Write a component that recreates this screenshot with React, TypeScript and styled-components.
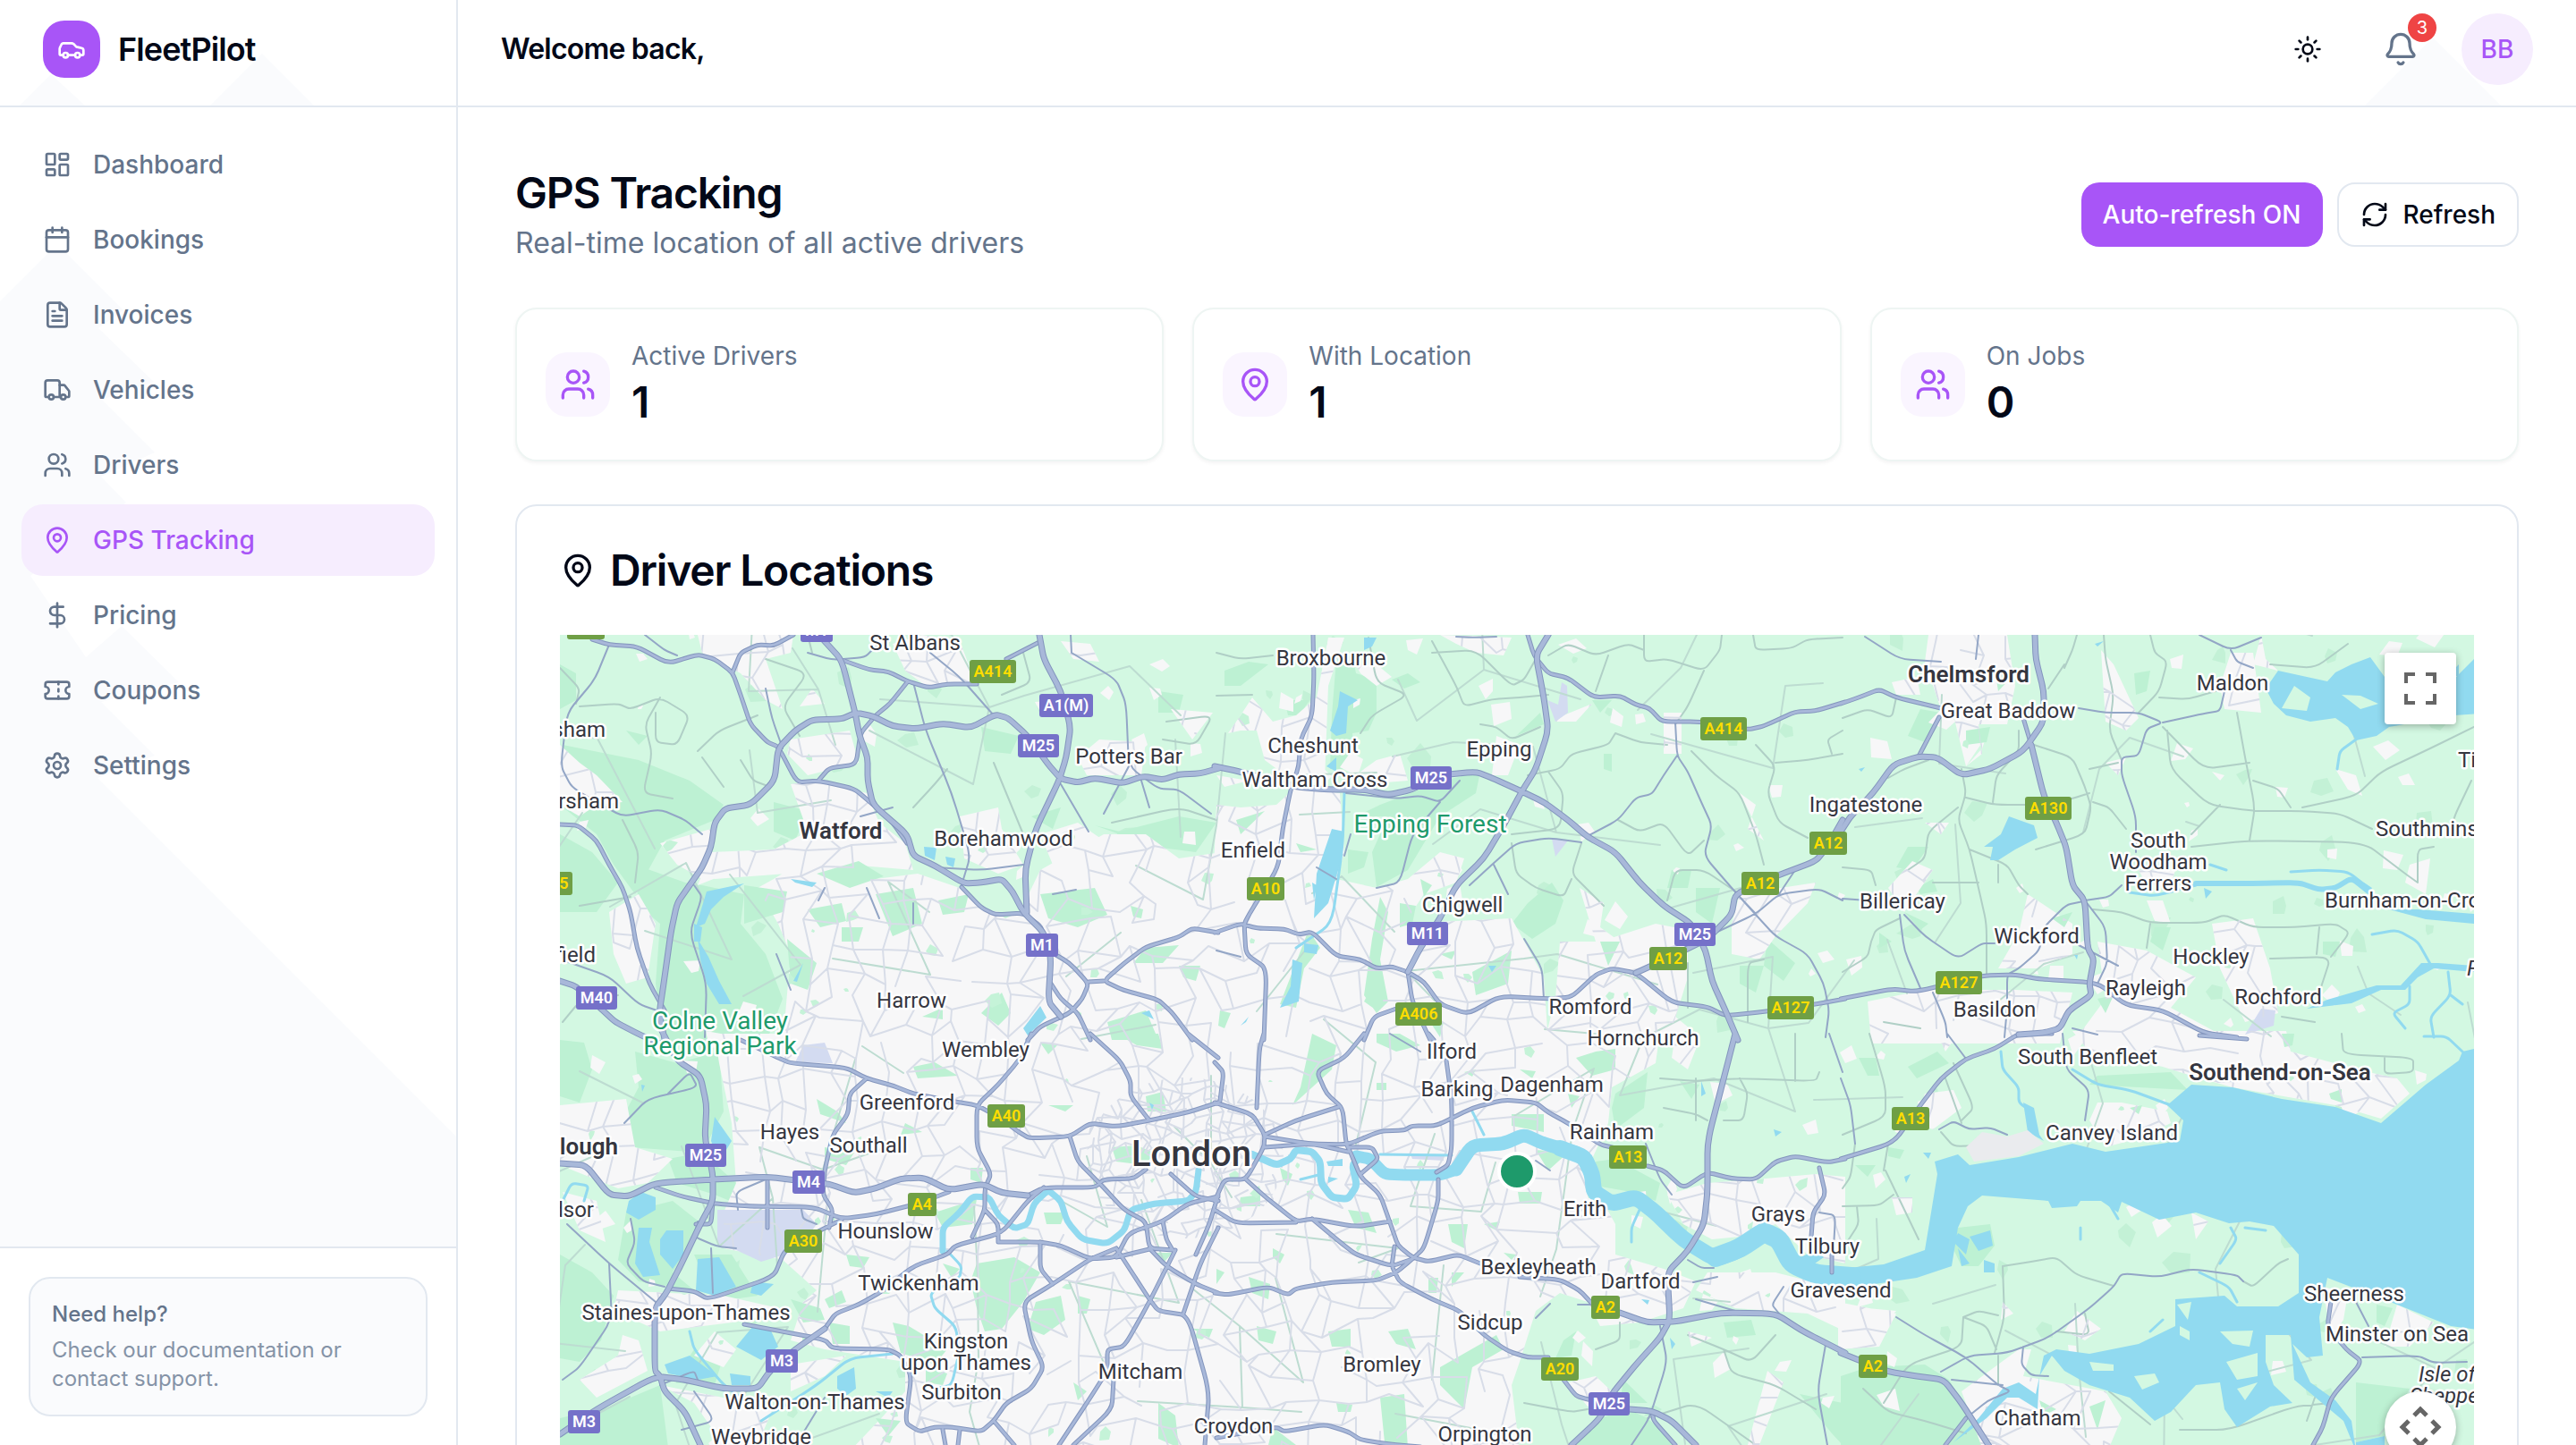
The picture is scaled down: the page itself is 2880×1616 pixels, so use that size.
import React from "react";
import styled, { createGlobalStyle } from "styled-components";
import {
  Bell,
  Calendar,
  Car,
  DollarSign,
  FileText,
  LayoutDashboard,
  MapPin,
  RefreshCw,
  Settings,
  Sun,
  Ticket,
  Truck,
  Users,
} from "lucide-react";

const color = {
  ink: "#020817",
  muted: "#64748b",
  line: "#e2e8f0",
  purple: "#a855f7",
  purpleSoft: "#f6edfe",
  purpleFaint: "#faf5ff",
  facet: "#fafbfd",
  red: "#ef4444",
};

const GlobalStyle = createGlobalStyle`
  *, *::before, *::after { box-sizing: border-box; }
  body {
    margin: 0;
    background: #fff;
    color: ${color.ink};
    font-family: Inter, "Liberation Sans", sans-serif;
    font-size: 28px;
    line-height: 40px;
    -webkit-font-smoothing: antialiased;
  }
  h1, h2, p, ul { margin: 0; padding: 0; }
  button { font: inherit; color: inherit; border: 0; padding: 0; background: none; cursor: pointer; }
`;

/* ---------- page shell ---------- */

const Shell = styled.div`
  display: grid;
  grid-template-columns: 512px minmax(0, 1fr);
  height: 100vh;
  overflow: hidden;
`;

const Sidebar = styled.aside`
  position: relative;
  z-index: 0;
  display: flex;
  flex-direction: column;
  min-height: 0;
  border-right: 2px solid ${color.line};
`;

const SidebarFacets = styled.svg`
  position: absolute;
  inset: 0 auto auto 0;
  z-index: -1;
  fill: ${color.facet};
`;

const Brand = styled.div`
  display: flex;
  align-items: center;
  gap: 20px;
  height: 120px;
  padding: 0 48px 8px;
  border-bottom: 2px solid ${color.line};
`;

const BrandMark = styled.span`
  display: grid;
  place-items: center;
  width: 64px;
  height: 64px;
  border-radius: 24px;
  background: ${color.purple};
  color: #fff;
`;

const BrandName = styled.span`
  font-size: 36px;
  font-weight: 600;
  letter-spacing: -0.025em;
`;

const Nav = styled.nav`
  flex: 1;
  padding: 24px;
`;

const NavList = styled.ul`
  display: flex;
  flex-direction: column;
  gap: 4px;
  list-style: none;
`;

const NavLink = styled.a<{ $active?: boolean }>`
  display: flex;
  align-items: center;
  gap: 24px;
  height: 80px;
  padding: 0 24px;
  border-radius: 24px;
  font-weight: 500;
  text-decoration: none;
  color: ${(p) => (p.$active ? color.purple : color.muted)};
  background: ${(p) => (p.$active ? color.purpleSoft : "transparent")};
`;

const SidebarFooter = styled.div`
  padding: 32px;
  border-top: 2px solid ${color.line};
  background: #fff;
`;

const HelpCard = styled.div`
  padding: 24px;
  border: 2px solid ${color.line};
  border-radius: 24px;
  background: ${color.facet};
  font-size: 24px;
  line-height: 32px;
  color: #8593a7;
`;

const HelpTitle = styled.p`
  margin-bottom: 8px;
  font-weight: 500;
  color: ${color.muted};
`;

const Column = styled.div`
  display: flex;
  flex-direction: column;
  min-width: 0;
  min-height: 0;
`;

const TopBar = styled.header`
  position: relative;
  z-index: 0;
  flex: none;
  display: flex;
  align-items: center;
  justify-content: space-between;
  height: 120px;
  padding: 0 48px 8px;
  border-bottom: 2px solid ${color.line};
`;

const TopBarFacet = styled.svg`
  position: absolute;
  right: 84px;
  bottom: 0;
  z-index: -1;
  fill: ${color.facet};
`;

const Greeting = styled.p`
  font-size: 32px;
  font-weight: 600;
  letter-spacing: -0.025em;
`;

const TopActions = styled.div`
  display: flex;
  align-items: center;
  gap: 32px;
`;

const IconButton = styled.button<{ $muted?: boolean }>`
  position: relative;
  display: grid;
  place-items: center;
  width: 72px;
  height: 72px;
  color: ${(p) => (p.$muted ? color.muted : color.ink)};
`;

const Badge = styled.span`
  position: absolute;
  top: -4px;
  right: -4px;
  width: 32px;
  height: 32px;
  border-radius: 50%;
  background: ${color.red};
  color: #fff;
  font-size: 20px;
  line-height: 32px;
  text-align: center;
`;

const Avatar = styled.button`
  width: 80px;
  height: 80px;
  border-radius: 50%;
  background: ${color.purpleSoft};
  color: ${color.purple};
  font-weight: 500;
`;

/* ---------- main content ---------- */

const Main = styled.main`
  flex: 1;
  min-height: 0;
  display: flex;
  flex-direction: column;
  gap: 48px;
  padding: 64px;
  overflow: hidden;
`;

const PageHead = styled.div`
  display: flex;
  align-items: center;
  justify-content: space-between;
`;

const PageTitle = styled.h1`
  font-size: 48px;
  line-height: 64px;
  font-weight: 600;
  letter-spacing: -0.025em;
`;

const PageLead = styled.p`
  font-size: 32px;
  line-height: 48px;
  color: ${color.muted};
`;

const ButtonRow = styled.div`
  display: flex;
  gap: 16px;
`;

const Button = styled.button<{ $primary?: boolean }>`
  display: flex;
  align-items: center;
  gap: 16px;
  height: 72px;
  padding: 0 24px;
  border-radius: 20px;
  font-weight: 500;
  ${(p) =>
    p.$primary
      ? `background: ${color.purple}; color: #fff;`
      : `background: #fff; border: 2px solid ${color.line};`}
`;

const Stats = styled.section`
  display: grid;
  grid-template-columns: repeat(3, minmax(0, 1fr));
  gap: 32px;
`;

const StatCard = styled.article`
  display: flex;
  align-items: center;
  gap: 24px;
  padding: 32px;
  border: 2px solid #eef5f3;
  border-radius: 24px;
  background: #fff;
  box-shadow: 0 2px 4px rgba(0, 0, 0, 0.05);
`;

const StatIcon = styled.span`
  display: grid;
  place-items: center;
  width: 72px;
  height: 72px;
  border-radius: 24px;
  background: ${color.purpleFaint};
  color: ${color.purple};
`;

const StatLabel = styled.p`
  color: ${color.muted};
`;

const StatValue = styled.p`
  font-size: 48px;
  line-height: 64px;
  font-weight: 600;
`;

const MapCard = styled.section`
  flex: none;
  display: flex;
  flex-direction: column;
  gap: 48px;
  padding: 48px;
  border: 2px solid ${color.line};
  border-radius: 24px;
  background: #fff;
`;

const MapTitle = styled.h2`
  display: flex;
  align-items: center;
  gap: 16px;
  font-size: 48px;
  line-height: 48px;
  font-weight: 600;
  letter-spacing: -0.025em;
`;

const MapFrame = styled.div`
  position: relative;
  height: 960px;
  overflow: hidden;
`;

const MapCanvas = styled.svg`
  display: block;
  width: 100%;
  height: 100%;
  font-family: Roboto, "Liberation Sans", sans-serif;
`;

const MapControl = styled.button<{ $round?: boolean }>`
  position: absolute;
  right: 20px;
  ${(p) => (p.$round ? "bottom: 34px; border-radius: 50%;" : "top: 20px; border-radius: 4px;")}
  display: grid;
  place-items: center;
  width: 80px;
  height: 80px;
  background: #fff;
  box-shadow: 0 2px 8px rgba(0, 0, 0, 0.3);
  color: #666;
`;

/* ---------- map data ---------- */

// The survey is split in six sheets of 1568 x 1380 units; each sheet knows
// which rectangle of the map plane it covers.
const sheets = {
  A: { x: 620, y: 700, w: 740 },
  B: { x: 620, y: 1156, w: 740 },
  C: { x: 1360, y: 700, w: 700 },
  D: { x: 1360, y: 1156, w: 700 },
  E: { x: 2060, y: 700, w: 720 },
  F: { x: 2060, y: 1156, w: 720 },
};
type Sheet = keyof typeof sheets;
type Layer = Partial<Record<Sheet, string[]>>;
type Point = [number, number];

const project = (sheet: Sheet, raw: string): Point[] => {
  const s = sheets[sheet];
  return raw
    .trim()
    .split(/\s+/)
    .map((pair) => {
      const [u, v] = pair.split(",").map(Number);
      return [Math.round(s.x + (u * s.w) / 1568), Math.round(s.y + v / 3)];
    });
};

const area = (pts: Point[]) => `M${pts.map((p) => p.join(" ")).join("L")}Z`;

// Rounds each inner vertex with a quadratic through the segment midpoints.
const curve = (pts: Point[]) => {
  let d = `M${pts[0].join(" ")}`;
  for (let i = 1; i < pts.length - 1; i++) {
    const [x, y] = pts[i];
    const [nx, ny] = pts[i + 1];
    const [px, py] = pts[i - 1];
    d += `L${(px + 3 * x) / 4} ${(py + 3 * y) / 4}Q${x} ${y} ${(nx + 3 * x) / 4} ${(ny + 3 * y) / 4}`;
  }
  return `${d}L${pts[pts.length - 1].join(" ")}`;
};

const build = (layer: Layer, draw: (pts: Point[]) => string) =>
  (Object.keys(layer) as Sheet[])
    .map((k) => layer[k]!.map((raw) => draw(project(k, raw))).join(""))
    .join("");

const motorways: Layer = {
  A: [
    "1575,478 1530,495 1480,497 1440,517 1395,503 1345,527 1280,510 1240,525 1200,512 1170,465 1120,370 1075,310 1045,298 985,342 920,328 855,345 800,335 755,303 715,292 680,312 610,315 570,350 530,410 522,520 465,600 405,612 380,660 370,740 350,810 320,870 290,930 275,1030 258,1200 248,1300 262,1400",
    "635,45 680,115 712,292 722,370 742,440 742,520 755,600 835,700 850,770 900,805 970,865 1010,862 1060,850 1085,890 1110,960 1160,1030 1175,1110 1170,1260 1200,1310",
    "1148,30 1160,110 1200,220 1222,340 1212,440 1195,520 1140,680 1115,820 1118,960",
    "13,1190 50,1210 115,1290 145,1330 205,1375 280,1420",
  ],
  B: [
    "250,-20 290,90 345,140 360,240 355,350 375,470 375,560 345,640 300,770 265,870 237,920 237,1130 250,1150 260,1200 310,1270 345,1380",
    "13,435 75,440 130,540 175,545 240,500 375,490 505,480 590,495 650,505 710,535 760,520 820,485 875,482 935,525 1015,505 1060,535 1120,542",
    "13,1345 100,1260 240,1150 310,1160 400,1190 480,1190 510,1130 570,1060 640,990",
  ],
  C: [
    "-5,470 50,485 200,540 280,550 370,550 430,568 490,550 560,500 650,488 690,510 760,553 820,590 880,650 930,708 1000,760 1060,860 1120,940 1190,1000 1225,1090 1240,1190 1275,1290 1305,1390",
    "830,30 800,100 820,240 830,350 800,480 765,553 720,670 670,780 600,870 560,980 510,1080 480,1160",
    "1050,1165 1130,1115 1230,1050 1290,970 1300,900 1400,840 1500,790 1530,740 1568,650",
  ],
  D: [
    "1300,0 1275,130 1230,360 1230,530 1220,640 1180,730 1130,800 1135,960 1110,1020 1050,1110 990,1210 960,1290 890,1380",
    "1035,1260 1090,1265 1140,1300 1200,1380",
    "1010,935 1080,968 1150,965 1265,935 1400,940 1470,1000 1575,1070",
  ],
  E: [
    "-5,690 20,640 75,560 125,465 185,438 230,440 290,500 360,480 440,420 490,320 490,220 470,110 468,30",
    "460,400 490,570 520,660 545,740 560,870 590,920 597,1080 612,1120 600,1200 605,1240 550,1290 530,1350 490,1365 430,1370",
  ],
  F: ["-5,1070 40,1095 110,1135 180,1150 245,1160 290,1240 360,1390"],
};

const mainRoads: Layer = {
  A: [
    "90,45 130,62 195,70 270,125 340,97 380,112 422,157 440,230 465,330 505,390 530,405 575,525 625,518 710,545 750,595 800,660 835,730",
    "680,115 745,148 790,152 838,185 885,207 930,195 1000,195",
    "1070,110 1148,55",
    "422,157 440,90 480,62 520,65 565,30",
    "838,185 795,260 760,300 725,360 715,465 650,478 625,518",
    "13,665 55,668 100,720 130,800 160,880 180,960 195,1080 225,1200 260,1290",
    "965,875 1010,945 1045,968 1110,962 1155,1010 1160,1080 1220,1130 1265,1200 1250,1250 1220,1300 1150,1345 1120,1390",
    "1175,1200 1200,1250 1240,1300 1270,1390",
    "1572,1028 1510,1015 1480,1045 1400,1078 1350,1130 1300,1190 1345,1220 1430,1255 1465,1300 1510,1390",
    "1300,1190 1265,1195",
  ],
  B: [
    "440,20 530,80 560,100 690,115 740,150 800,175 850,200 950,228 1000,240 1050,280 1100,330 1125,352 1220,345 1270,300 1330,312 1410,292 1500,265 1572,230",
    "1120,542 1160,515 1280,515 1300,490 1370,485 1400,455",
    "240,515 300,545 380,570 460,580 615,583 680,620 760,605 860,570 935,530",
    "270,855 330,865 365,890 520,815 545,730 600,680 680,625",
    "505,480 505,650",
    "375,560 370,640 335,640",
    "740,150 700,200 695,270 660,340 640,460 635,540 660,590 650,650",
    "1130,0 1100,90 1050,170 1000,240 1000,380 1035,470 1020,520 1020,590 990,680",
    "640,990 665,940 720,910 780,860 850,780 930,740 950,710 1060,670 1120,560 1160,515",
    "1050,700 1150,700 1200,710 1270,755 1330,750 1360,670 1440,630 1500,570 1572,545",
    "1020,590 1050,640 1050,700",
    "1330,720 1270,755 1180,840 1110,900 1130,1030 1160,1120 1130,1190 1070,1240 1040,1300 1010,1335 940,1320 900,1320 865,1335 830,1305 845,1150 820,1080 790,1060 660,1055 640,1025 450,975",
    "1270,0 1340,90 1365,160 1365,210 1410,290",
    "1500,0 1572,80",
    "1220,345 1240,430 1290,500 1350,590 1400,630 1410,720 1465,725",
    "1330,750 1410,722",
    "1460,470 1520,545 1572,560",
    "1330,720 1410,890 1430,930 1500,945 1550,1200 1540,1380",
    "1410,720 1450,780 1520,840 1572,870",
    "1470,725 1410,900 1350,1050 1310,1060 1310,1130 1270,1220 1195,1380",
    "1325,1160 1320,1260 1230,1380",
    "1040,1300 1090,1380",
    "920,1330 925,1380",
    "960,1330 955,1380",
    "1150,700 1150,790 1180,840",
    "1440,630 1450,690 1465,725",
    "1572,650 1530,770 1490,940",
    "1572,540 1550,640 1520,740",
  ],
  C: [
    "243,30 245,170 240,300 210,380 205,470 185,550 165,680 155,810 85,960 70,1000 75,1100 125,1150 118,1390",
    "480,1160 490,1260 535,1390",
    "780,30 795,100 830,160 880,175 945,240 1010,235 1050,265 1085,275 1115,320 1210,322 1330,348 1370,335 1450,287 1500,285 1575,255",
    "-5,1030 60,1000 100,1015 170,1018 205,1035 240,1025 300,1108 360,1120 400,1148 440,1142 480,1160 520,1195 560,1270 630,1302 710,1242 830,1250 890,1245 950,1170 990,1150 1050,1165 1140,1262 1230,1278 1275,1308 1380,1293 1500,1270 1575,1250",
    "370,1390 395,1310 450,1285",
  ],
  D: [
    "118,0 108,50 100,250",
    "-5,95 18,130 10,225",
    "-5,230 90,270 120,340 118,380 75,490 20,490 -5,560",
    "75,490 120,545 200,630 240,620 350,648 435,630",
    "-5,590 50,635 200,632",
    "370,0 320,80 250,125 275,200 315,250 325,370 335,400 360,480 410,540 440,650 455,710 490,750 530,765 605,742 660,770",
    "305,245 200,290 120,340",
    "120,345 230,370 330,372 410,328 470,325 490,310 550,308 640,250 720,222 800,232 830,265 880,300 960,372 1000,385",
    "1080,445 1120,460 1170,518 1230,465 1290,485 1350,488 1400,430 1450,410 1530,432 1575,420",
    "120,380 240,370 330,395",
    "330,380 390,380 405,420 360,470",
    "575,90 590,220 590,380 580,440 550,465",
    "555,490 555,560 520,720 490,755 450,800 400,828 290,835 200,855 180,875 130,850 30,875 -5,870",
    "240,622 310,700 350,740 440,780 490,755",
    "445,715 440,780 460,835 540,890 610,930 670,1010 730,1065 780,1085 830,1085",
    "760,815 860,825 910,860 940,905",
    "870,1160 900,1215 930,1228 980,1240",
    "1090,1270 1095,1300 1150,1380",
    "0,1355 60,1340 150,1320 170,1335 270,1310 330,1335 360,1362 430,1378 510,1385",
    "1510,450 1525,540 1495,600 1490,680",
    "1540,740 1540,800",
    "530,0 545,20",
  ],
  E: [
    "235,305 185,438",
    "440,310 460,400",
    "-5,260 40,240 90,213 130,240 240,275",
    "-5,1250 120,1217 180,1228 340,1172 420,1170 480,1185 620,1198 690,1272 780,1290 880,1365 960,1380",
  ],
  F: [
    "-5,420 125,365 190,240 240,150 300,85 370,50 430,0 510,0",
    "870,5 985,18",
    "300,1290 250,1380",
    "1190,900 1180,980 1225,1060 1265,1100 1190,1220 1170,1320 1145,1380",
  ],
};

const localRoads: Layer = {
  A: [
    "850,190 880,350 940,560 985,770 965,870",
    "1225,90 1330,180 1355,260 1360,470 1430,545 1480,550 1555,630",
    "1225,90 1222,30",
    "1360,470 1300,630",
    "1200,530 1265,690",
    "1390,520 1410,610",
    "500,210 515,310 540,410",
    "130,62 95,180 30,290 15,470 40,540 100,590 160,640 250,615 310,650 350,700",
    "600,90 660,115 735,105 760,70",
    "890,90 960,170 1040,300",
    "900,810 1010,820 1110,800",
    "330,870 350,910 320,1030 360,1200 355,1380",
    "525,1100 560,1220",
    "740,880 770,980",
    "850,930 850,1000",
    "15,1120 130,1175 200,1270 260,1300",
    "215,30 260,80 290,100",
    "725,640 800,610",
    "1180,900 1235,885",
    "640,880 625,920",
  ],
  B: [
    "165,300 220,220 340,180 320,130 270,200",
    "435,590 430,530 500,490",
    "585,590 590,620 620,640",
    "340,630 330,680 385,715 430,720",
    "180,620 190,700 170,770 210,830 260,850",
    "370,720 375,870",
    "30,640 130,770 240,900",
    "250,1180 330,1130 340,1160",
    "330,1200 380,1300 300,1330",
    "130,770 135,960 60,1120 20,1160",
    "580,1360 640,1220",
  ],
  C: [
    "1150,325 1153,435 1180,490 1215,590 1240,670 1220,770 1290,880 1350,970 1400,1040 1480,1100 1520,1200 1535,1290 1525,1380",
    "1153,435 1120,500 1090,565 1050,575 1005,650 930,705",
    "635,870 690,800 750,730 830,712 915,725",
    "1250,1030 1350,965 1410,900 1510,882 1568,920",
    "1310,910 1350,965",
    "1410,900 1450,820",
    "560,590 490,700 460,860 400,880",
    "325,560 450,580 510,570 560,590 610,520",
    "770,1050 815,1150 820,1250",
    "695,800 730,900",
    "250,810 300,850",
    "335,700 320,770",
    "600,35 640,40 700,35",
    "0,1090 60,1110",
  ],
  D: [
    "435,0 510,60",
    "1075,370 1110,490 1140,540",
    "1110,980 1130,1100 1085,1290 1040,1380",
    "1180,760 1215,785 1245,785",
    "1195,835 1255,815",
    "800,425 835,458",
    "1535,0 1568,130",
    "905,908 940,908",
    "835,905 800,955",
    "1200,890 1300,930",
    "1420,850 1390,910 1410,940",
    "1510,600 1550,610 1545,720",
    "1525,1045 1505,1200 1530,1380",
  ],
  E: [
    "55,35 140,110 240,120",
    "330,30 325,110",
    "575,275 640,290 720,290 780,325 740,345 720,435 680,440 680,500 715,640 715,760",
    "780,325 880,295 920,285 930,220",
    "150,970 200,1040 280,1115 340,1065 370,1065",
    "140,970 150,1090 190,1215",
    "585,925 545,935 490,1010 480,1090 430,1150 400,1170 400,1280 395,1380",
    "680,870 650,910 590,920",
    "590,920 640,1010 645,1130 620,1200",
    "220,1230 250,1330 255,1380",
    "575,1070 670,1140",
    "0,915 60,920",
    "870,30 945,80 1020,40",
    "945,80 960,120 1000,140",
    "560,1350 620,1370",
  ],
  F: [
    "240,1135 310,1080 400,1070 500,1020 600,920 660,850 680,805 770,815 850,790 960,810 975,830",
    "130,950 200,1010 300,1085 380,1180 410,1200 355,1230 300,1290",
    "440,1050 435,1110 460,1145 500,1150",
    "265,1160 390,1180",
    "535,0 545,120 600,190 590,290",
    "235,320 270,295 310,320 360,315 400,340",
    "1265,1085 1400,1080 1440,1105 1520,1100",
    "-5,150 20,240 30,370",
    "1250,900 1280,980",
    "255,0 300,85",
  ],
};

const lanes: Layer = {
  A: [
    "13,140 60,210 50,260",
    "60,270 150,260 180,280 250,240 320,300 290,400 240,390 240,290",
    "250,240 215,330 230,430 210,560 280,580",
    "500,110 600,160 540,270 580,370",
    "340,420 390,350 480,300",
    "350,440 400,540",
    "160,650 200,760 190,860",
    "440,450 470,520 510,540",
    "1060,230 1130,190 1110,90",
    "850,610 900,530 930,480",
    "1040,460 1110,700",
    "600,30 610,90",
    "1320,660 1480,610 1568,650",
    "1450,320 1560,300 1520,400 1440,380",
    "60,940 180,910",
    "20,1330 60,1260 150,1240",
  ],
  C: [
    "0,90 60,110 140,100",
    "0,235 90,230",
    "540,50 600,200 620,270 690,245 760,240 830,230",
    "540,90 650,80 740,200 770,180 800,110",
    "380,40 400,190 480,230 390,300 360,360",
    "660,330 700,340 740,380 810,340",
    "1000,360 980,400 890,430 860,480 780,500",
    "1000,360 1060,390 1130,400",
    "830,100 880,60 950,100 1030,60 1070,80",
    "980,100 950,220",
    "1070,30 1070,120 1130,110 1220,150 1260,80 1265,30",
    "1220,150 1180,270 1150,330",
    "1350,400 1400,470 1380,560 1410,660 1480,710",
    "1400,460 1480,450 1568,430",
    "1345,30 1350,80 1440,75 1480,45 1568,40",
    "1190,420 1250,500 1310,560 1350,700 1370,800",
    "1005,650 1060,690 1120,660 1180,770 1220,720",
    "830,490 870,560 860,680 740,700",
    "915,730 890,830 940,900 970,940",
    "740,730 750,830 800,880 870,910 890,850",
    "1130,920 1150,820 1220,820 1310,900",
    "1180,1130 1180,1280",
    "1330,1330 1330,1130 1370,1120",
    "1568,350 1530,380 1540,430",
  ],
  D: [
    "1110,150 1200,160 1310,150 1500,160 1510,130",
    "1310,150 1330,200 1320,290 1270,290",
    "1120,250 1200,270 1230,290",
    "1200,150 1200,290",
    "1450,0 1450,160",
    "1180,1010 1270,1060 1340,1100 1400,1010",
    "1270,1060 1290,1140 1400,1180 1500,1260",
    "950,1060 1010,1030 1010,970",
    "770,1240 890,1270 930,1260",
    "1080,1290 1200,1240 1350,1380",
  ],
  E: [
    "0,310 60,280 120,310 130,240",
    "110,510 150,480 210,450",
    "290,480 300,560 280,650 310,750 330,880 350,1000 350,1170",
    "280,610 210,690 200,780 160,820",
    "300,575 370,600 500,600 560,580 600,560",
    "365,590 375,500 430,420 430,350",
    "465,400 560,440 590,540 605,610 590,700 470,750",
    "600,480 670,460",
    "610,590 650,610 690,680",
    "635,30 640,110 660,230 650,350 680,450",
    "750,30 760,90 790,120 770,220 720,290",
    "770,240 840,245 930,210",
    "540,140 560,80 570,30",
    "500,210 540,130",
    "780,340 880,480 990,460",
    "790,350 800,480 890,600 1000,620 1120,620 1210,630 1290,680",
    "960,290 980,440 1005,610 990,720",
    "1000,520 1060,545 1090,610",
    "920,600 850,700",
    "1538,340 1430,410 1310,490 1250,570 1120,610",
    "850,740 990,720 1270,725 1370,830 1400,860",
    "1440,740 1400,750 1400,860",
    "310,750 400,800 430,870 450,900",
    "380,860 380,800",
    "220,860 330,860",
    "70,1060 80,1020 140,980",
    "0,1160 60,1110 70,1060",
    "610,950 680,960 750,995 880,995 930,970 1000,1010 1100,1010 1200,1000 1235,1030 1190,1110",
    "1160,1010 1155,1100",
    "1040,1115 1190,1110 1160,1230",
    "750,1000 740,1080",
    "1040,130 1150,140 1230,60",
    "1530,520 1490,640 1480,700",
    "100,1330 190,1350",
    "1070,1310 1150,1330",
    "0,810 70,820 80,870",
  ],
  F: [
    "390,780 395,950 370,1070",
    "390,780 460,765 520,750 570,810 660,845",
    "65,0 105,180 105,280 0,340",
    "105,460 185,690",
    "110,370 100,460",
    "0,580 90,575 125,540",
    "35,580 40,640 10,700",
    "0,520 20,480 30,370",
    "975,830 1000,850 1060,770 1085,755",
    "1215,0 1220,70 1390,80 1390,130 1320,135 1320,80",
    "250,150 290,300",
    "270,100 320,250 290,290",
    "240,330 270,378 340,375",
    "295,950 330,930 380,945",
    "295,950 290,1050 160,1110 100,1240",
    "295,950 350,980 375,1060",
    "520,1000 600,1010 590,940",
    "50,1190 110,1270 200,1300 300,1340",
    "820,1330 940,1330 1100,1250 1190,1240",
    "1130,1300 1150,1220",
    "650,1200 750,1310",
    "380,1180 380,1080",
  ],
};

const towns: Layer = {
  A: [
    "540,1400 560,1100 530,1000 480,880 520,850 600,780 700,790 760,850 860,830 960,880 1010,950 1100,970 1150,820 1300,700 1400,700 1480,780 1580,760 1580,1400",
    "560,530 620,520 740,560 770,660 830,730 850,820 700,800 550,830 380,850 370,760 520,750 600,690",
    "800,60 870,30 960,50 1000,200 880,200 830,150",
    "340,30 565,30 560,90 500,110 540,280 500,250 440,160 350,90",
    "560,380 700,350 720,460 600,500 550,430",
    "13,400 60,460 100,500 160,590 100,600 60,640 13,600",
    "960,640 1050,610 1060,680 1110,800 1050,830 970,780",
    "1290,380 1400,390 1390,500 1260,500 1240,440",
    "250,730 370,680 370,760 350,850 290,800",
    "1150,700 1240,660 1300,720 1180,800",
    "130,960 200,900 240,1000 220,1180 170,1200 140,1100",
    "500,760 430,820 340,870 370,760",
    "1200,50 1270,60 1290,120 1230,110",
    "610,210 640,260 580,270",
    "1460,280 1560,290 1510,380",
  ],
  B: [
    "380,0 1580,0 1580,1400 700,1400 780,1280 830,1200 830,1100 640,1060 560,1030 590,900 620,860 540,760 400,720 400,600 430,500 420,300 390,100",
    "13,240 170,220 190,380 280,420 220,500 150,520 13,440",
    "150,860 400,880 560,930 420,970 250,1000 140,930",
    "250,1180 400,1220 520,1250 480,1380 400,1380 330,1240",
    "20,530 100,560 120,700 60,660",
    "60,1160 150,1080 160,1010 200,1030 220,1130 100,1220",
    "380,1000 430,1060 400,1120 330,1080",
    "560,1110 690,1080 640,1150 560,1200",
  ],
  C: [
    "-10,880 -5,740 0,600 60,610 150,600 200,540 310,560 320,760 300,850 400,880 480,850 560,760 620,780 600,860 520,900 470,1000 600,990 740,980 780,1080 820,1180 830,1400 -10,1400",
    "860,1060 960,1060 1100,1000 1180,1020 1180,1180 1130,1400 820,1400 850,1250",
    "1310,900 1500,860 1480,930 1400,1040 1360,1120 1290,1100 1290,1000",
    "90,240 140,320 200,300 250,240 280,40 320,40 280,200 270,520 190,520 120,450 100,350 60,350 30,360 60,300",
    "560,30 740,40 720,100 650,90 600,60",
    "700,370 760,400 730,500 690,500",
    "1120,290 1165,290 1165,430 1120,430",
    "350,130 400,130 440,170 400,200 360,160",
    "360,490 400,450 460,430 480,520 370,530",
    "910,880 970,930 960,1010 1010,1060 950,1060",
    "870,300 940,260 900,320 850,320",
    "1310,560 1350,600 1330,680 1370,720",
    "0,500 80,520 20,540",
  ],
  D: [
    "-10,-10 1110,-10 1100,100 990,180 980,300 940,420 950,520 1000,640 1000,740 1120,790 1200,830 1170,920 1060,970 960,980 930,900 860,870 800,930 760,1100 740,1180 760,1400 -10,1400",
    "1130,540 1230,500 1350,490 1500,470 1575,480 1575,770 1480,740 1400,640 1310,680 1240,690 1170,640",
    "1230,800 1400,800 1575,860 1575,1000 1480,940 1300,920 1200,860",
    "1150,0 1210,20 1180,120 1140,80",
    "1380,1130 1420,1170 1360,1380 1330,1380",
    "880,1170 950,1150 990,1200 930,1250",
    "1180,1000 1240,1020 1190,1050",
  ],
  E: [
    "210,30 400,30 420,200 400,330 330,330 340,430 300,470 270,300 240,280 200,120",
    "945,90 1000,90 1020,290 930,280 920,200",
    "170,790 220,820 150,960 110,880",
    "450,900 560,1000 560,1100 480,1150 380,1150 430,1030",
    "60,1260 200,1220 420,1220 560,1230 530,1400 70,1400",
    "620,1060 740,1090 860,1180 800,1280 960,1400 560,1400 640,1250",
    "900,1000 1000,980 1040,1150 1060,1300 980,1330 920,1150",
    "720,820 810,820 800,870 740,870",
    "740,920 780,920 800,1000 760,990",
    "1200,480 1250,500 1265,570 1230,550",
    "1380,800 1430,780 1420,900 1370,860",
    "630,80 660,130 720,310 690,350 640,320",
    "200,660 260,660 240,700",
    "340,410 350,370 300,470",
    "120,190 180,170 190,230 130,230",
    "640,460 690,440 670,500",
    "1020,30 1030,110 1060,150 1000,130",
    "900,490 930,500 920,520",
  ],
  F: [
    "560,-10 1080,-10 1090,60 1280,130 1350,150 1380,200 1310,285 1200,240 950,180 850,140 780,110 600,60",
    "620,230 680,230 790,260 800,300 720,350 640,380 600,290",
    "290,1200 430,1060 460,1060 440,1150 640,1200 680,1290 650,1390 340,1390",
    "200,200 270,190 290,250 220,320 180,300",
    "-10,900 130,940 90,1050 -10,1060",
    "1170,850 1230,870 1220,960 1190,1020",
    "1350,910 1440,970 1380,1050 1320,1050",
    "120,550 170,550 170,600 130,610",
    "850,600 890,630 860,690",
    "570,930 630,990 590,1030 540,1000",
    "390,900 415,940 385,960",
    "230,0 280,0 250,60",
    "60,920 130,930 110,960",
  ],
};

const woods: Layer = {
  A: [
    "20,400 200,450 320,520 400,600 380,650 260,720 190,900 140,800 100,700 13,600",
    "190,800 310,860 350,870 450,900 440,1000 500,1100 540,1250 500,1400 260,1400 240,1200 250,1000 200,940",
    "13,130 50,160 50,250 13,280",
    "13,700 90,760 150,860 100,960 13,960",
    "170,350 220,370 200,400",
    "1430,220 1490,230 1480,290 1430,290",
    "520,590 600,620 570,720 520,690",
    "1280,670 1340,690 1480,640 1568,660 1520,760 1420,740",
    "1130,640 1200,610 1180,680",
    "1010,340 1100,370 1080,430 1020,420",
  ],
  B: [
    "190,60 290,100 390,60 400,260 350,400 180,380 165,270 200,180",
    "13,740 90,800 140,880 110,1030 60,1100 13,1090",
    "13,1290 130,1250 250,1180 270,1390 13,1390",
    "170,600 280,560 350,640 280,800 330,860 200,830 150,760",
    "330,740 420,740 480,880 380,900",
    "13,20 70,30 90,120 60,230 13,210",
    "270,420 350,400 430,500 430,570 380,540 290,500",
    "330,1060 400,1080 380,1180 290,1150",
  ],
  C: [
    "300,110 340,100 350,160 400,180 400,290 380,350 340,360 350,480 285,480 290,300",
    "410,600 570,520 660,490 650,560 560,640 480,820 400,875 390,760 430,640 350,640",
    "840,860 870,920 850,1000 790,1050 740,1000 780,930",
    "20,150 80,120 130,130 60,200 20,200",
    "1200,880 1260,880 1240,1000 1200,960",
    "750,370 810,290 820,330",
    "440,180 480,160 510,190 470,210",
    "970,430 990,430 990,490 970,480",
    "170,250 230,250 210,300 180,300",
    "1380,1050 1450,1130 1420,1190 1370,1140",
    "1310,1140 1370,1140 1350,1230 1310,1200",
    "940,250 990,250 960,290",
    "1140,820 1190,820 1180,880 1130,880",
  ],
  D: [
    "1000,200 1080,130 1070,250 1000,320 990,250",
    "950,430 1000,420 1110,500 1100,560 1040,530 950,510",
    "960,1290 1030,1260 1080,1290 1160,1390 880,1390",
    "870,1030 900,1000 890,1080 850,1090",
    "1270,970 1340,960 1350,1010 1280,1020",
    "1020,1160 1080,1240 1010,1240",
    "1160,160 1210,170 1190,220",
    "1460,1210 1568,1240 1568,1380 1540,1340",
  ],
  E: [
    "190,280 240,290 200,390 160,370",
    "710,160 750,150 740,220 715,230",
    "160,740 210,740 170,820 130,810",
    "180,880 220,850 230,890 190,900",
    "1170,1060 1210,1060 1200,1110 1170,1100",
    "760,1010 800,1010 780,1090 750,1060",
    "90,1030 120,1060 90,1080",
    "150,960 210,1000 190,1020",
  ],
  F: [
    "-5,1150 60,1120 200,1110 260,1160 360,1390 -5,1390",
    "280,650 360,640 370,710 330,780 290,780 265,710",
    "1250,1170 1380,1190 1320,1350 1250,1370",
    "620,140 800,130 840,190 720,180 600,170",
    "160,110 230,60 260,100 180,150",
    "1300,910 1340,920 1320,980 1300,970",
    "40,80 80,80 90,140 60,140",
    "110,380 150,390 140,420 110,410",
    "30,440 80,440 60,480",
  ],
};

const parks: Layer = {
  A: [
    "450,870 550,890 540,960 450,1000",
    "760,900 850,880 870,1000 800,1040",
    "550,1050 620,1130 600,1220 560,1200",
    "1010,1300 1060,1230 1080,1300 1050,1340",
    "1310,1330 1400,1290 1430,1390 1320,1390",
    "1370,1130 1400,1080 1480,1070 1440,1130",
    "1150,900 1280,880 1310,970 1240,1010 1170,980",
    "600,950 680,930 690,990 630,1010",
    "870,1310 920,1280 920,1320",
    "1480,1140 1530,1140 1520,1190 1490,1180",
    "910,920 980,900 970,960 920,970",
    "680,1010 730,1010 720,1060 680,1060",
    "1365,940 1395,950 1390,980 1370,975",
    "620,830 720,790 780,840 700,880",
  ],
  B: [
    "1000,770 1090,750 1150,800 1110,900 1060,990 1020,1000 1000,920 985,830",
    "1140,900 1200,880 1210,960 1160,1010 1120,990",
    "800,970 840,980 930,1060 900,1110 820,1070",
    "850,110 900,95 955,140 860,150",
    "1320,380 1380,375 1420,400 1400,440 1330,430",
    "1400,210 1440,195 1450,260 1405,260",
    "1330,0 1430,0 1440,50 1380,40",
    "620,220 670,260 690,300 630,270",
    "900,600 1000,555 990,640 920,650",
    "1430,1240 1470,1280 1480,1390 1430,1360",
    "1170,240 1230,240 1210,260",
    "690,740 745,750 730,785 700,780",
    "640,380 710,400 690,440 640,420",
    "985,450 1015,450 1010,500 985,490",
    "1160,600 1210,600 1200,640 1165,640",
    "1420,735 1465,735 1440,770",
    "640,890 680,860 690,900 650,920",
    "760,1290 820,1300 790,1350",
    "560,890 630,920 640,960 590,970",
    "1240,880 1270,890 1260,940 1240,940",
    "650,970 700,980 700,1040 660,1040",
    "1150,30 1190,40 1170,70",
    "1510,990 1560,990 1550,1020",
    "920,770 960,790 940,820",
    "830,300 870,330 820,340",
    "1230,1170 1260,1200 1240,1230",
    "880,1120 930,1140 920,1180 880,1170",
  ],
  C: [
    "410,910 430,960 410,1120 430,1260 400,1300 370,1240 390,1050",
    "640,1160 740,1090 730,1200 650,1240",
    "960,1060 1010,1060 980,1140",
    "330,750 380,760 370,810 330,830",
    "460,930 500,940 490,1000 460,1010",
    "200,730 250,750 210,760",
    "10,1290 35,1300 20,1350 5,1340",
    "560,1100 600,1090 590,1120",
    "390,1210 420,1240 400,1290 370,1260",
    "510,850 540,870 520,910",
    "230,1020 260,1080 220,1150 200,1280 160,1270",
    "530,1320 570,1330 560,1380",
    "500,630 540,650 500,720 470,700",
    "50,650 120,620 60,700",
  ],
  D: [
    "950,60 1000,50 1000,120 940,140 900,80",
    "560,1120 700,1010 720,1060 640,1120 620,1260 560,1180",
    "330,590 380,600 400,670 350,650",
    "580,640 630,640 620,720 590,700",
    "280,1000 335,990 335,1050 290,1050",
    "430,1000 480,990 500,1060 450,1040",
    "100,980 150,1000 140,1040 105,1030",
    "240,0 300,40 290,120 240,180 190,240 210,180",
    "410,1220 470,1210 480,1390 420,1370",
    "740,270 820,270 820,330 740,310",
    "800,390 880,400 830,460",
    "755,530 815,530 810,570 760,570",
    "160,450 190,470 180,510 165,490",
    "60,550 110,540 110,580 55,580",
    "140,720 170,740 160,770 140,750",
    "80,815 135,840 130,890 90,870",
    "530,820 555,820 550,870 530,870",
    "300,1240 340,1245 335,1270 305,1270",
    "400,0 460,0 510,40 450,60 400,30",
    "670,640 710,630 700,660",
    "400,165 425,165 425,190 400,190",
    "880,200 910,210 890,250",
    "620,130 650,120 640,145",
    "760,120 800,125 790,150",
    "140,1320 200,1380 130,1380",
    "590,800 620,800 590,850",
    "720,735 750,740 740,760",
    "0,790 20,800 0,840",
  ],
  E: [
    "300,350 360,340 350,390 300,400",
    "510,980 560,960 540,1010",
    "370,140 420,160 380,220",
    "620,1250 660,1240 640,1300",
  ],
  F: [
    "1185,200 1215,185 1215,230 1190,220",
    "1070,0 1100,0 1095,40 1075,45",
    "600,1250 640,1230 620,1330",
    "700,250 730,240 720,270",
    "480,1230 520,1260 490,1280",
  ],
};

const water: Layer = {
  A: [
    "360,890 450,865 400,910 370,950 355,1000 335,1010",
    "340,1050 365,1110 390,1190 420,1270 390,1270 360,1200 345,1120",
    "330,1000 350,1010 345,1060 330,1060",
    "875,740 905,745 900,785 878,770",
    "925,775 950,780 945,810 930,800",
    "560,850 620,860 610,875 570,860",
    "565,1190 590,1130 575,1195",
    "1110,1350 1150,1275 1165,1315 1120,1375",
    "1390,1300 1410,1290 1420,1320",
  ],
  B: [
    "175,560 205,530 240,550 240,590 200,625 170,600",
    "200,650 230,650 225,700 250,810 210,815 190,770",
    "265,660 305,660 305,740 280,790 250,740 250,690",
    "340,755 390,750 430,850 380,880 335,860",
    "470,980 510,990 530,1050 490,1095 430,1050",
    "260,1110 320,1080 385,1150 340,1160 270,1140",
    "380,280 420,360 390,430 370,360",
    "670,1150 710,1120 715,1190 690,1215 670,1190",
    "415,1140 465,1150 465,1180 420,1180",
    "760,1200 800,1200 790,1220",
    "470,830 520,840 490,880 465,870",
    "205,170 215,175 208,195",
    "1410,230 1420,240 1415,255",
  ],
  C: [
    "290,680 320,690 310,800 280,930 245,980 250,830",
    "220,1065 255,1070 250,1100 220,1095",
    "190,1120 215,1130 205,1260 160,1280 185,1210",
    "310,220 355,250 330,270 325,360 300,370 285,350 305,270",
    "370,40 400,40 390,70 370,80",
    "680,1140 700,1140 690,1160",
    "275,470 300,440 300,490",
    "240,860 250,870 245,920",
    "60,1340 80,1310 75,1330",
  ],
  D: [
    "275,430 315,420 315,445 280,445",
    "1065,890 1085,895 1080,910",
    "1135,1020 1150,1040 1140,1060",
    "1215,160 1225,200 1215,210",
    "1395,320 1415,330 1400,345",
    "1460,750 1500,730 1520,750 1490,780",
    "280,480 305,485 280,500",
  ],
  E: [
    "1030,210 1060,150 1130,170 1180,185 1200,155 1240,130 1285,105 1320,170 1400,200 1480,190 1538,110 1580,110 1580,290 1490,300 1330,340 1300,370 1250,385 1230,340 1200,310 1140,322 1080,300 1050,260",
    "405,640 465,670 475,710 420,750 380,785 360,785 365,740 345,740 385,700",
    "1330,950 1400,950 1538,965 1580,975 1580,1005 1538,1000 1420,985",
    "1270,860 1290,880 1280,900 1240,850",
    "1410,1130 1450,1130 1538,1140 1538,1160 1440,1150 1400,1180 1370,1220 1310,1220 1240,1265 1130,1285 1180,1255 1300,1205 1360,1205",
    "880,880 900,890 885,915",
    "40,480 55,475 45,490",
    "615,60 635,50 620,70",
    "565,1105 572,1105 570,1120",
    "1485,150 1500,130 1500,180",
  ],
  F: [
    "-10,790 100,775 200,725 215,600 230,470 225,430 280,405 310,440 430,415 560,370 640,395 820,360 830,290 790,240 850,170 950,180 1070,220 1200,245 1310,300 1420,170 1500,90 1510,60 1538,50 1580,50 1580,1000 1480,980 1350,910 1180,820 1160,950 1170,1080 1130,1085 1095,1040 1140,1170 1200,1230 1240,1300 1250,1400 1220,1300 1100,1160 1090,1010 1030,1010 1030,1100 1050,1180 1095,1240 1040,1250 960,1320 930,1260 920,1170 860,1180 800,1270 760,1300 700,1220 600,1180 540,1130 510,1080 480,1150 475,1260 430,1220 400,1220 350,1290 270,1370 330,1290 390,1190 430,1170 470,1210 490,1080 520,1060 600,1075 720,1040 810,980 810,890 930,880 960,915 1060,915 1110,870 1110,740 1050,645 990,630 940,635 860,600 770,625 680,565 670,600 630,560 580,560 570,580 510,585 500,560 340,543 305,580 280,650 265,780 180,820 50,845 -10,855",
    "440,230 465,250 480,340 490,360 450,330",
    "280,670 310,690 300,740 270,700",
    "310,680 360,660 365,710 330,730",
    "345,760 370,770 370,800 345,800",
    "150,480 165,470 155,500",
    "1250,1370 1320,1350 1320,1400 1250,1400",
    "280,720 310,770 290,780",
    "195,400 215,400 210,420",
  ],
};

const islands: Layer = {
  E: ["1100,200 1140,240 1130,285 1070,275", "1215,230 1260,235 1305,260 1260,280"],
  F: [
    "600,1100 660,1110 660,1130 610,1130",
    "710,1150 760,1140 770,1170 730,1195",
    "920,1000 1000,995 990,1050 950,1040",
    "935,1100 1010,1070 1010,1150 960,1160",
    "820,980 845,1000 845,1030 820,1010",
    "960,1190 1010,1170 980,1230",
    "815,910 850,900 840,960",
  ],
};

const streams: Layer = {
  B: [
    "930,730 965,780 960,820 890,870 900,920 950,980 960,1060 940,1180 900,1190",
    "800,1075 700,1090 620,1180 490,1300",
    "20,560 40,500 80,510 70,560",
    "320,1000 330,1060 400,1180 460,1240",
  ],
  C: ["320,560 315,740 290,1000 200,1080"],
  D: ["410,405 590,408", "1060,590 1040,650 1040,700", "640,260 670,340", "210,490 265,470"],
  E: [
    "1250,380 1210,420 1205,480",
    "1090,825 1160,820 1230,825 1280,880",
    "700,895 760,905 860,870",
    "895,800 935,820",
    "1430,1135 1400,1060 1350,1020 1290,1035",
    "1475,1160 1480,1240 1430,1310 1440,1380",
    "1380,1210 1380,1270 1340,1300 1370,1350",
    "1480,1240 1510,1270",
  ],
  F: [
    "385,60 390,120 430,180 430,230 460,260",
    "560,120 620,170 700,190 800,240",
    "580,650 580,690",
    "650,570 670,620",
    "945,650 960,690 920,770",
    "980,650 1030,660",
    "870,800 940,850 960,900",
    "1415,10 1470,10 1510,60",
    "750,1000 780,960",
  ],
};

const thames: { width: number; sheet: Sheet; raw: string }[] = [
  {
    width: 7,
    sheet: "B",
    raw: "920,730 920,650 960,600 990,545 1030,550 1050,610 1090,655 1120,640 1135,570 1170,525 1200,560 1215,630 1250,690 1310,705 1350,660 1365,590 1420,570 1500,560 1520,530 1525,460",
  },
  {
    width: 8,
    sheet: "D",
    raw: "90,405 150,440 185,420 200,390 240,395 260,430 262,500 290,550 330,555 352,510 340,440 360,410",
  },
  {
    width: 13,
    sheet: "D",
    raw: "350,410 385,420 420,470 470,475 560,475 600,455 640,380",
  },
  {
    width: 15,
    sheet: "D",
    raw: "600,455 640,375 720,368 770,340 820,370 900,400",
  },
  {
    width: 18,
    sheet: "D",
    raw: "860,385 920,415 940,470 945,530 990,570 1050,550 1100,600 1170,690 1250,755 1310,725 1370,660",
  },
  {
    width: 22,
    sheet: "D",
    raw: "1250,750 1310,720 1370,665 1410,690 1440,770 1500,808 1590,815",
  },
  { width: 6, sheet: "E", raw: "860,865 1000,865 1110,860 1160,885 1200,880 1240,845 1280,890" },
];

const airfields: Layer = {
  B: ["385,590 590,590 620,640 600,680 545,740 490,765 430,725 385,710", "590,40 640,30 660,100 570,95"],
  C: ["865,190 878,200 880,290 850,320 828,250 855,265", "840,715 880,720 850,775"],
  D: ["485,405 570,408 570,425 490,420"],
  E: ["1020,1285 1055,1290 1050,1340 980,1370"],
};

/* Seeded generator so that the street pattern is the same on every paint. */
const seeded = (seed: number) => () => {
  seed = (seed * 1664525 + 1013904223) % 4294967296;
  return seed / 4294967296;
};

const mesh = (box: number[], cell: number, keep: number, seed: number) => {
  const [x0, y0, x1, y1] = box;
  const rnd = seeded(seed);
  const cols = Math.ceil((x1 - x0) / cell);
  const rows = Math.ceil((y1 - y0) / cell);
  const node: string[][] = [];
  for (let r = 0; r <= rows; r++) {
    node.push([]);
    for (let c = 0; c <= cols; c++) {
      const x = x0 + c * cell + (rnd() - 0.5) * cell * 0.9 + (r % 2) * cell * 0.3;
      const y = y0 + r * cell + (rnd() - 0.5) * cell * 0.9;
      node[r].push(`${Math.round(x)} ${Math.round(y)}`);
    }
  }
  let d = "";
  for (let r = 0; r < rows; r++)
    for (let c = 0; c < cols; c++) {
      if (rnd() < keep) d += `M${node[r][c]}L${node[r][c + 1]}`;
      if (rnd() < keep) d += `M${node[r][c]}L${node[r + 1][c]}`;
    }
  return d;
};

const scatter = (count: number, min: number, max: number, seed: number, corners = 5) => {
  const rnd = seeded(seed);
  let d = "";
  for (let i = 0; i < count; i++) {
    const cx = 626 + rnd() * 2140;
    const cy = 710 + rnd() * 960;
    const size = min + rnd() * (max - min);
    const turn = rnd() * 6;
    const pts: Point[] = [];
    for (let k = 0; k < corners; k++) {
      const a = turn + (k * Math.PI * 2) / corners;
      const l = size * (0.3 + rnd() * 0.7);
      pts.push([Math.round(cx + Math.cos(a) * l), Math.round(cy + Math.sin(a) * l)]);
    }
    d += area(pts);
  }
  return d;
};

const townPath = build(towns, area);
const mapPaths = {
  woods: build(woods, area),
  parks: build(parks, area),
  water: build(water, area),
  islands: build(islands, area),
  airfields: build(airfields, area),
  streams: build(streams, curve),
  lanes: build(lanes, curve),
  local: build(localRoads, curve),
  main: build(mainRoads, curve),
  motorway: build(motorways, curve),
  streets: mesh([620, 700, 2780, 1680], 28, 0.72, 7),
  centre: mesh([1190, 1180, 1460, 1420], 13, 0.7, 21),
  tracks: mesh([620, 700, 2780, 1680], 74, 0.22, 5),
  hamlets: scatter(180, 5, 20, 11, 4),
  copses: scatter(150, 6, 20, 42),
  greens: scatter(200, 3, 11, 90),
};

type Place = [name: string, x: number, y: number, anchor?: "start" | "end", kind?: "bold" | "green" | "italic"];

const places: Place[] = [
  ["St Albans", 1023, 727],
  ["Chesham", 677, 824, "end"],
  ["Amersham", 692, 904, "end"],
  ["Potters Bar", 1262, 854],
  ["Watford", 940, 938, undefined, "bold"],
  ["Borehamwood", 1122, 946],
  ["Beaconsfield", 666, 1076, "end"],
  ["Harrow", 1019, 1127],
  ["Colne Valley", 805, 1151, undefined, "green"],
  ["Regional Park", 805, 1179, undefined, "green"],
  ["Wembley", 1102, 1182],
  ["Greenford", 1014, 1241],
  ["Hayes", 883, 1274],
  ["Southall", 971, 1289],
  ["Slough", 691, 1291, "end", "bold"],
  ["Windsor", 664, 1361, "end"],
  ["Hounslow", 990, 1385],
  ["Twickenham", 1027, 1443],
  ["Staines-upon-Thames", 767, 1476],
  ["Kingston", 1080, 1508],
  ["upon Thames", 1080, 1532],
  ["Surbiton", 1075, 1565],
  ["Walton-on-Thames", 911, 1576],
  ["Weybridge", 851, 1615],
  ["Mitcham", 1275, 1542],
  ["Croydon", 1379, 1603],
  ["Broxbourne", 1488, 744],
  ["Cheshunt", 1468, 842],
  ["Waltham Cross", 1470, 880],
  ["Epping", 1676, 846],
  ["Epping Forest", 1599, 931, undefined, "green"],
  ["Enfield", 1401, 959],
  ["Chigwell", 1635, 1020],
  ["Romford", 1778, 1134],
  ["Hornchurch", 1837, 1169],
  ["Ingatestone", 2086, 908],
  ["Ilford", 1623, 1184],
  ["Barking", 1629, 1226],
  ["Dagenham", 1735, 1221],
  ["Rainham", 1802, 1274],
  ["Erith", 1772, 1360],
  ["Grays", 1988, 1366],
  ["Tilbury", 2043, 1402],
  ["Bexleyheath", 1720, 1425],
  ["Dartford", 1834, 1441],
  ["Gravesend", 2058, 1451],
  ["Sidcup", 1666, 1487],
  ["Bromley", 1545, 1534],
  ["Orpington", 1660, 1612],
  ["Chelmsford", 2201, 763, undefined, "bold"],
  ["Great Baddow", 2245, 803],
  ["Maldon", 2496, 772],
  ["Tillingham", 2748, 858, "start"],
  ["South", 2413, 948],
  ["Woodham", 2413, 972],
  ["Ferrers", 2413, 996],
  ["Southminster", 2656, 935, "start"],
  ["Burnham-on-Crouch", 2599, 1015, "start"],
  ["Billericay", 2127, 1016],
  ["Wickford", 2277, 1055],
  ["Hockley", 2472, 1078],
  ["Rayleigh", 2399, 1113],
  ["Rochford", 2547, 1123],
  ["Basildon", 2230, 1137],
  ["Foulness", 2758, 1091, "start", "italic"],
  ["South Benfleet", 2334, 1190],
  ["Southend-on-Sea", 2549, 1208, undefined, "bold"],
  ["Canvey Island", 2361, 1275],
  ["Sheerness", 2632, 1455],
  ["Minster on Sea", 2680, 1500],
  ["Isle of", 2704, 1545, "start", "italic"],
  ["Sheppey", 2694, 1569, "start", "italic"],
  ["Chatham", 2278, 1594],
];

const shields: [name: string, x: number, y: number][] = [
  ["A41", 655, 702],
  ["M1", 913, 705],
  ["A414", 1110, 751],
  ["A1(M)", 1192, 789],
  ["M25", 1161, 834],
  ["A355", 614, 988],
  ["M1", 1165, 1057],
  ["M40", 667, 1116],
  ["M25", 789, 1292],
  ["M4", 904, 1322],
  ["A4", 1031, 1347],
  ["A30", 898, 1388],
  ["A40", 1125, 1248],
  ["M3", 874, 1522],
  ["M3", 653, 1590],
  ["M25", 1600, 870],
  ["M11", 1596, 1044],
  ["A10", 1415, 994],
  ["A406", 1586, 1134],
  ["A414", 1927, 815],
  ["A12", 1968, 988],
  ["A12", 2044, 943],
  ["M25", 1895, 1045],
  ["A12", 1865, 1072],
  ["A127", 2002, 1127],
  ["A13", 1820, 1294],
  ["A2", 1795, 1462],
  ["A20", 1744, 1531],
  ["M25", 1799, 1570],
  ["A130", 2290, 904],
  ["A127", 2190, 1099],
  ["A13", 2136, 1251],
  ["A2", 2094, 1528],
];

const labelSize: Record<string, number> = { green: 28, bold: 26 };

const PlaceLabel = styled.text<{ $kind?: string }>`
  font-size: ${(p) => labelSize[p.$kind ?? ""] ?? 24}px;
  font-weight: ${(p) => (p.$kind === "bold" ? 600 : 400)};
  font-style: ${(p) => (p.$kind === "italic" ? "italic" : "normal")};
  fill: ${(p) => (p.$kind === "green" ? "#1e9a6b" : "#35363f")};
  stroke: #fff;
  stroke-width: 5px;
  stroke-linejoin: round;
  paint-order: stroke;
`;

const CityLabel = styled(PlaceLabel)`
  font-size: 40px;
  font-weight: 500;
`;

const ShieldText = styled.text<{ $motorway: boolean }>`
  font-size: 18px;
  font-weight: 600;
  fill: ${(p) => (p.$motorway ? "#fff" : "#ffdd00")};
`;

function Shield({ name, x, y }: { name: string; x: number; y: number }) {
  const motorway = name.startsWith("M") || name.endsWith("(M)");
  const widths: Record<number, number> = { 2: motorway ? 36 : 32, 3: motorway ? 46 : 42, 4: 52, 5: 60 };
  const width = widths[name.length];
  return (
    <g>
      <rect x={x - width / 2} y={y - 13} width={width} height={26} rx={3} fill={motorway ? "#7571c9" : "#6f9f45"} />
      <ShieldText $motorway={motorway} x={x} y={y + 6} textAnchor="middle">
        {name}
      </ShieldText>
    </g>
  );
}

function DriverMap() {
  const cased = (d: string, width: number) => (
    <>
      <path d={d} stroke="#8395bd" strokeWidth={width} />
      <path d={d} stroke="#a8b8d9" strokeWidth={width - 2} />
    </>
  );
  return (
    <MapCanvas viewBox="626 710 2140 960" preserveAspectRatio="xMidYMid slice" role="img" aria-label="Map of London">
      <clipPath id="town-clip">
        <path d={townPath} />
      </clipPath>
      <clipPath id="centre-clip">
        <ellipse cx={1325} cy={1295} rx={110} ry={90} />
      </clipPath>
      <rect x={626} y={710} width={2140} height={960} fill="#d3f8e2" />
      <path d={mapPaths.copses} fill="#c3f1d6" />
      <path d={mapPaths.woods} fill="#bdf1d3" />
      <path d={mapPaths.hamlets} fill="#f7f7f8" />
      <path d={townPath} fill="#f7f7f8" />
      <path d={mapPaths.parks} fill="#bdf1d3" />
      <g clipPath="url(#town-clip)">
        <path d={mapPaths.greens} fill="#c5f3d8" />
      </g>
      <path d={mapPaths.airfields} fill="#d3dbf1" />
      <g fill="none" strokeLinecap="round" strokeLinejoin="round">
        <path d={mapPaths.tracks} stroke="#bddcd1" strokeWidth={2} />
        <path d={mapPaths.lanes} stroke="#b0cfc6" strokeWidth={2} />
        <g clipPath="url(#town-clip)" stroke="#d8dde8">
          <path d={mapPaths.streets} strokeWidth={2} />
          <g clipPath="url(#centre-clip)">
            <path d={mapPaths.centre} strokeWidth={2} />
          </g>
        </g>
      </g>
      <path d={mapPaths.water} fill="#91daf0" />
      <path d={mapPaths.islands} fill="#d3f8e2" />
      <g fill="none" stroke="#91daf0" strokeLinecap="round" strokeLinejoin="round">
        <path d={mapPaths.streams} strokeWidth={3} />
        {thames.map((reach) => (
          <path key={reach.raw} d={curve(project(reach.sheet, reach.raw))} strokeWidth={reach.width} />
        ))}
      </g>
      <path
        d={area(project("F", "300,380 340,330 400,345 450,325 490,370 430,410 320,430"))}
        fill="#eaebee"
      />
      <g fill="none" strokeLinecap="round" strokeLinejoin="round">
        <path d={mapPaths.local} stroke="#93a6c6" strokeWidth={2} />
        {cased(mapPaths.main, 5)}
        {cased(mapPaths.motorway, 7)}
      </g>
      {shields.map(([name, x, y]) => (
        <Shield key={`${name}-${x}`} name={name} x={x} y={y} />
      ))}
      {places.map(([name, x, y, anchor, kind]) => (
        <PlaceLabel key={name} $kind={kind} x={x} y={y} textAnchor={anchor ?? "middle"}>
          {name}
        </PlaceLabel>
      ))}
      <CityLabel x={1332} y={1304} textAnchor="middle">
        London
      </CityLabel>
      <circle cx={1696} cy={1310} r={20} fill="#1e9a6b" stroke="#fff" strokeWidth={4} />
    </MapCanvas>
  );
}

const navItems = [
  { label: "Dashboard", icon: LayoutDashboard },
  { label: "Bookings", icon: Calendar },
  { label: "Invoices", icon: FileText },
  { label: "Vehicles", icon: Truck },
  { label: "Drivers", icon: Users },
  { label: "GPS Tracking", icon: MapPin, active: true },
  { label: "Pricing", icon: DollarSign },
  { label: "Coupons", icon: Ticket },
  { label: "Settings", icon: Settings },
];

const stats = [
  { label: "Active Drivers", value: 1, icon: Users },
  { label: "With Location", value: 1, icon: MapPin },
  { label: "On Jobs", value: 0, icon: Users },
];

export default function App() {
  return (
    <>
      <GlobalStyle />
      <Shell>
        <Sidebar>
          <SidebarFacets width="510" height="1394" viewBox="0 0 510 1394" aria-hidden="true">
            <path d="M22 118L57 83L95 118ZM235 118L293 60L351 118Z" />
            <path d="M0 337L54 283H74L138 347L110 367L172 427L114 447L173 506L113 533L141 562L34 644L96 735L136 700L200 763L113 785L173 845L109 870L510 1271V1394H0Z" />
          </SidebarFacets>
          <Brand>
            <BrandMark>
              <Car size={32} />
            </BrandMark>
            <BrandName>FleetPilot</BrandName>
          </Brand>
          <Nav aria-label="Main">
            <NavList>
              {navItems.map(({ label, icon: Icon, active }) => (
                <li key={label}>
                  <NavLink href="#" $active={active} aria-current={active ? "page" : undefined}>
                    <Icon size={32} />
                    {label}
                  </NavLink>
                </li>
              ))}
            </NavList>
          </Nav>
          <SidebarFooter>
            <HelpCard>
              <HelpTitle>Need help?</HelpTitle>
              <p>Check our documentation or contact support.</p>
            </HelpCard>
          </SidebarFooter>
        </Sidebar>

        <Column>
          <TopBar>
            <TopBarFacet width="152" height="76" viewBox="0 0 152 76" aria-hidden="true">
              <path d="M0 76L76 0L152 76Z" />
            </TopBarFacet>
            <Greeting>Welcome back,</Greeting>
            <TopActions>
              <IconButton aria-label="Toggle theme">
                <Sun size={32} />
              </IconButton>
              <IconButton $muted aria-label="Notifications">
                <Bell size={40} />
                <Badge>3</Badge>
              </IconButton>
              <Avatar>BB</Avatar>
            </TopActions>
          </TopBar>

          <Main>
            <PageHead>
              <div>
                <PageTitle>GPS Tracking</PageTitle>
                <PageLead>Real-time location of all active drivers</PageLead>
              </div>
              <ButtonRow>
                <Button $primary>Auto-refresh ON</Button>
                <Button>
                  <RefreshCw size={32} />
                  Refresh
                </Button>
              </ButtonRow>
            </PageHead>

            <Stats>
              {stats.map(({ label, value, icon: Icon }) => (
                <StatCard key={label}>
                  <StatIcon>
                    <Icon size={40} />
                  </StatIcon>
                  <div>
                    <StatLabel>{label}</StatLabel>
                    <StatValue>{value}</StatValue>
                  </div>
                </StatCard>
              ))}
            </Stats>

            <MapCard>
              <MapTitle>
                <MapPin size={40} />
                Driver Locations
              </MapTitle>
              <MapFrame>
                <DriverMap />
                <MapControl aria-label="Toggle fullscreen view">
                  <svg width="36" height="36" viewBox="0 0 36 36" fill="none" stroke="currentColor" strokeWidth="4">
                    <path d="M2 12V2H12M24 2H34V12M34 24V34H24M12 34H2V24" />
                  </svg>
                </MapControl>
                <MapControl $round aria-label="Map camera controls">
                  <svg width="48" height="48" viewBox="0 0 48 48" fill="none" stroke="currentColor" strokeWidth="5">
                    <path d="M17 11L24 4L31 11M17 37L24 44L31 37M11 17L4 24L11 31M37 17L44 24L37 31" />
                  </svg>
                </MapControl>
              </MapFrame>
            </MapCard>
          </Main>
        </Column>
      </Shell>
    </>
  );
}
